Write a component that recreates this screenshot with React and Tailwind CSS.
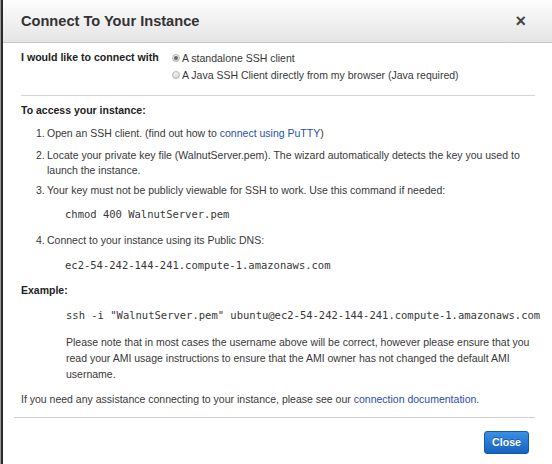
import React from "react";

function Radio({ checked }) {
  return (
    <span className="inline-flex items-center justify-center w-[8px] h-[8px] rounded-full border border-[#b5b5b5] bg-gradient-to-b from-[#f4f4f4] to-[#d8d8d8] shrink-0">
      {checked && <span className="w-[4px] h-[4px] rounded-full bg-[#666]" />}
    </span>
  );
}

const mono = { fontFamily: '"DejaVu Sans Mono", "Liberation Mono", monospace' };

export default function App() {
  const sans = { fontFamily: '"Liberation Sans", Arial, sans-serif' };
  return (
    <div className="w-[552px] h-[464px] bg-[#9a9a9a] pl-px" style={sans}>
      <div className="h-full bg-white border-l-2 border-[#2a2a2a] flex flex-col overflow-hidden text-[#383838]">
        <div className="h-[43px] shrink-0 bg-gradient-to-b from-[#fdfdfd] to-[#e5e5e5] border-b border-[#c9c9c9] flex items-center justify-between pl-[18px] pr-[26px]">
          <h1 className="text-[14.6px] font-bold text-[#333] leading-none">Connect To Your Instance</h1>
          <span className="text-[18px] leading-none text-[#444] font-bold">×</span>
        </div>

        <div className="pl-[18px] pr-[17px] flex flex-col text-[10.5px] leading-[15px]">
          <div className="flex pt-[7px] pb-[12px] border-b border-[#d5d5d5]">
            <div className="w-[151px] font-bold text-[10.6px] text-[#222]">I would like to connect with</div>
            <div className="flex flex-col gap-[1px]">
              <label className="flex items-center gap-[2px] h-[16px]">
                <Radio checked />
                <span>A standalone SSH client</span>
              </label>
              <label className="flex items-center gap-[2px] h-[16px]">
                <Radio />
                <span>A Java SSH Client directly from my browser (Java required)</span>
              </label>
            </div>
          </div>

          <div className="font-bold text-[#222] mt-[7px]">To access your instance:</div>

          <ol className="pl-[15px] mt-[8px] flex flex-col">
            <li className="flex">
              <span className="w-[11px] shrink-0">1.</span>
              <span>
                Open an SSH client. (find out how to{" "}
                <span className="text-[#1f4fa8]">connect using PuTTY</span>)
              </span>
            </li>
            <li className="flex mt-[7px]">
              <span className="w-[11px] shrink-0">2.</span>
              <span>
                Locate your private key file (WalnutServer.pem). The wizard automatically detects the key you used to launch the instance.
              </span>
            </li>
            <li className="flex mt-[5px]">
              <span className="w-[11px] shrink-0">3.</span>
              <span>Your key must not be publicly viewable for SSH to work. Use this command if needed:</span>
            </li>
            <li className="pl-[29px] mt-[9px]" style={mono}>
              chmod 400 WalnutServer.pem
            </li>
            <li className="flex mt-[11px]">
              <span className="w-[11px] shrink-0">4.</span>
              <span>Connect to your instance using its Public DNS:</span>
            </li>
            <li className="pl-[29px] mt-[10px]" style={mono}>
              ec2-54-242-144-241.compute-1.amazonaws.com
            </li>
          </ol>

          <div className="font-bold text-[#222] mt-[10px]">Example:</div>

          <div className="pl-[45px] mt-[10px] whitespace-nowrap" style={mono}>
            ssh -i "WalnutServer.pem" ubuntu@ec2-54-242-144-241.compute-1.amazonaws.com
          </div>

          <p className="pl-[45px] mt-[11px] leading-[16px]">
            Please note that in most cases the username above will be correct, however please ensure that you read your AMI usage instructions to ensure that the AMI owner has not changed the default AMI username.
          </p>

          <p className="mt-[10px]">
            If you need any assistance connecting to your instance, please see our{" "}
            <span className="text-[#1f4fa8]">connection documentation</span>.
          </p>
        </div>

        <div className="ml-[11px] mr-[17px] mt-[10px] border-t border-[#d0d0d0] flex justify-end pt-[13px] pr-[6px]">
          <button className="h-[23px] w-[45px] rounded-[3px] border border-[#1458a8] bg-gradient-to-b from-[#3c8fe3] to-[#1463c2] text-white font-bold text-[10.6px] [text-shadow:0_-1px_0_rgba(0,0,0,0.3)]">
            Close
          </button>
        </div>
      </div>
    </div>
  );
}
